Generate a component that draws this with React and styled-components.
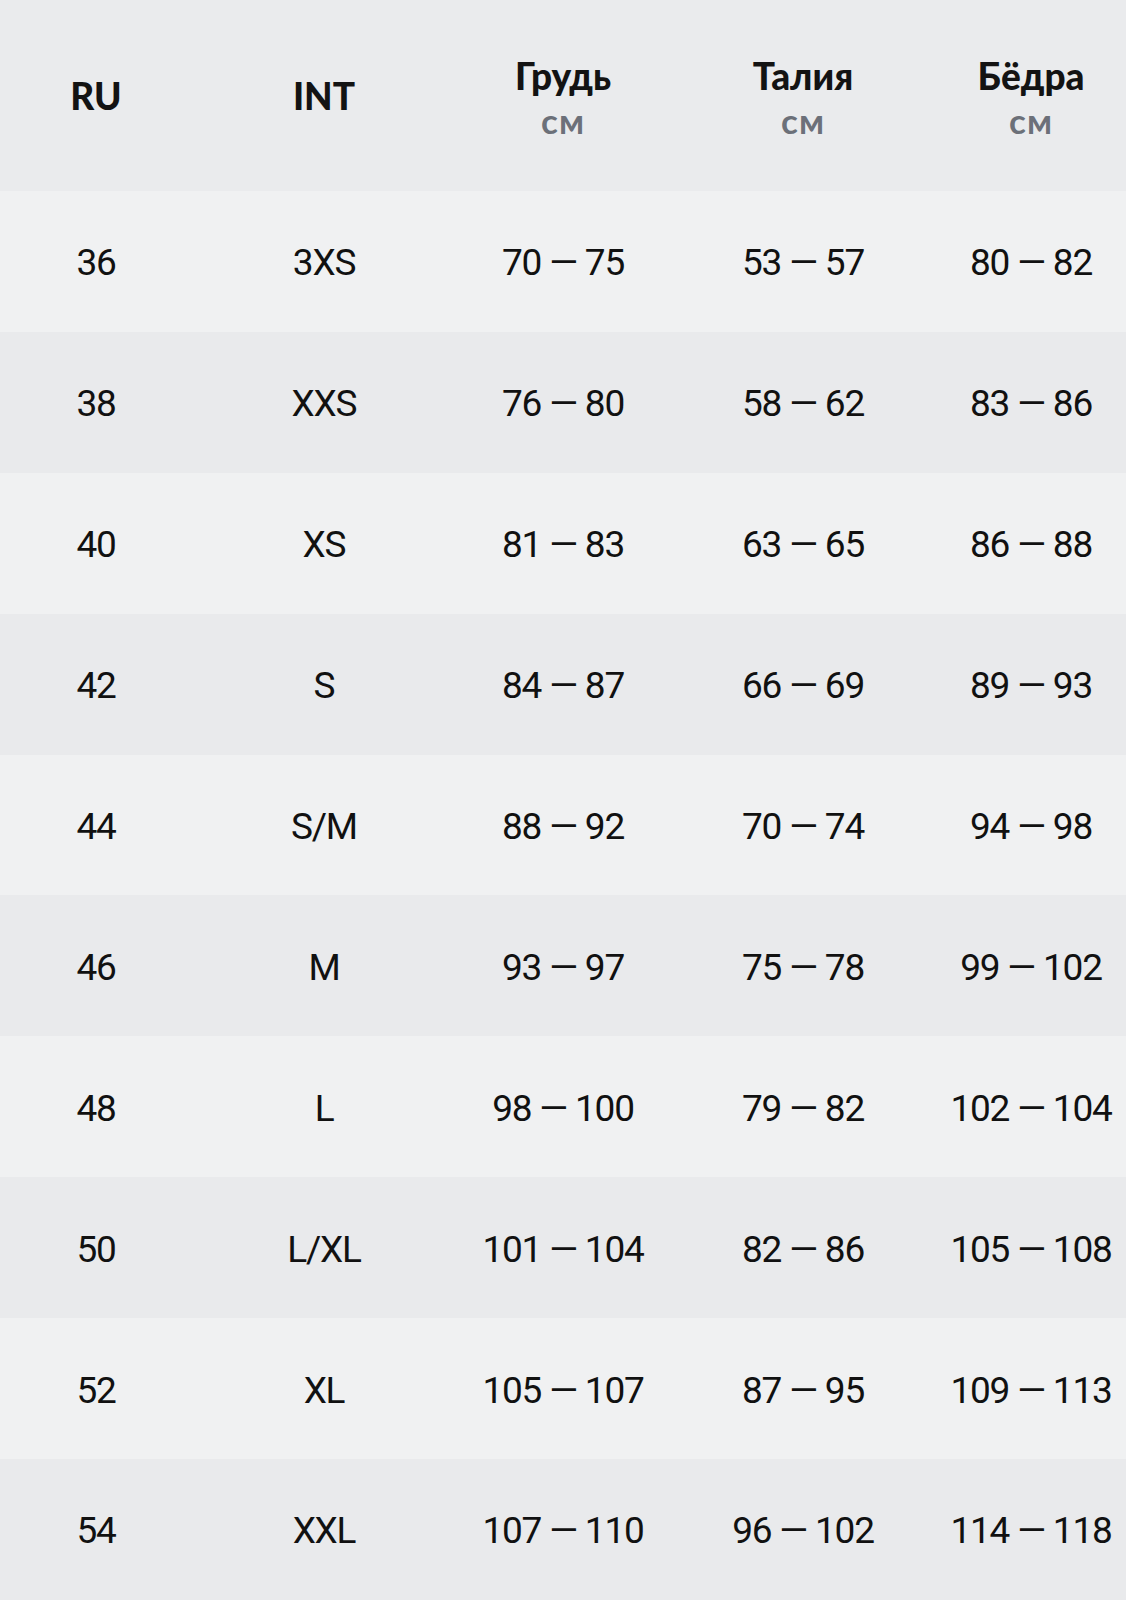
import React from 'react';
import styled, { createGlobalStyle } from 'styled-components';

const GlobalStyle = createGlobalStyle`
  html, body {
    margin: 0;
    padding: 0;
    background: #ebecee;
  }
  body {
    font-family: Roboto, 'Liberation Sans', sans-serif;
    color: #111;
  }
`;

const columns = '192px 264px 214px 266px 190px';

const Table = styled.div`
  width: 1126px;
  display: flex;
  flex-direction: column;
`;

const HeadRow = styled.div`
  display: grid;
  grid-template-columns: ${columns};
  height: 191px;
  background: #eaebed;
  align-items: center;
`;

const HeadCell = styled.div`
  display: flex;
  flex-direction: column;
  align-items: center;
  justify-content: center;
`;

const HeadTitle = styled.span`
  font-family: Lato, 'Noto Sans', sans-serif;
  font-weight: 900;
  font-size: 37px;
  line-height: 40px;
  color: #131313;
`;

const Unit = styled.span`
  font-family: Lato, 'Noto Sans', sans-serif;
  font-weight: 700;
  font-size: 35px;
  line-height: 30px;
  letter-spacing: 1px;
  margin-top: 9px;
  color: #6c7079;
`;

const Row = styled.div`
  display: grid;
  grid-template-columns: ${columns};
  height: 140.9px;
  align-items: center;
  padding-top: 3px;
  box-sizing: border-box;
  background: ${props => (props.odd ? '#f0f1f2' : '#e9eaec')};
`;

const Cell = styled.div`
  text-align: center;
  font-size: 37px;
  font-weight: 400;
  letter-spacing: -1.2px;
  color: #111;
  white-space: nowrap;
`;

const rows = [
  ['36', '3XS', '70 — 75', '53 — 57', '80 — 82'],
  ['38', 'XXS', '76 — 80', '58 — 62', '83 — 86'],
  ['40', 'XS', '81 — 83', '63 — 65', '86 — 88'],
  ['42', 'S', '84 — 87', '66 — 69', '89 — 93'],
  ['44', 'S/M', '88 — 92', '70 — 74', '94 — 98'],
  ['46', 'M', '93 — 97', '75 — 78', '99 — 102'],
  ['48', 'L', '98 — 100', '79 — 82', '102 — 104'],
  ['50', 'L/XL', '101 — 104', '82 — 86', '105 — 108'],
  ['52', 'XL', '105 — 107', '87 — 95', '109 — 113'],
  ['54', 'XXL', '107 — 110', '96 — 102', '114 — 118'],
];

const heads = [
  { title: 'RU' },
  { title: 'INT' },
  { title: 'Грудь', unit: 'см' },
  { title: 'Талия', unit: 'см' },
  { title: 'Бёдра', unit: 'см' },
];

export default function App() {
  return (
    <>
      <GlobalStyle />
      <Table>
        <HeadRow>
          {heads.map(h => (
            <HeadCell key={h.title}>
              <HeadTitle>{h.title}</HeadTitle>
              {h.unit && <Unit>{h.unit}</Unit>}
            </HeadCell>
          ))}
        </HeadRow>
        {rows.map((r, i) => (
          <Row key={r[0]} odd={i % 2 === 0}>
            {r.map((c, j) => (
              <Cell key={j}>{c}</Cell>
            ))}
          </Row>
        ))}
      </Table>
    </>
  );
}
